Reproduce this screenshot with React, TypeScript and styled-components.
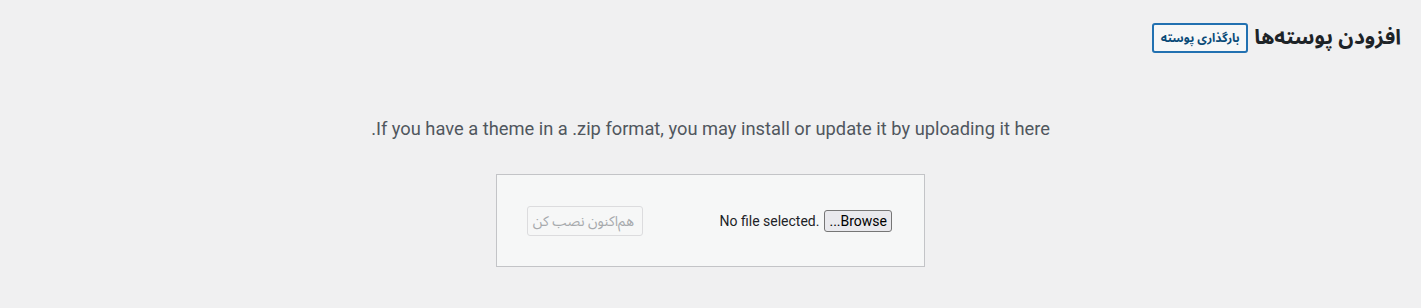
import React from "react";
import styled, { createGlobalStyle } from "styled-components";

const Global = createGlobalStyle`
  html, body { margin: 0; padding: 0; background: #f0f0f1; }
  body {
    font-family: Roboto, "Noto Sans Arabic", "DejaVu Sans", sans-serif;
    color: #3c434a;
    direction: rtl;
  }
`;

const Wrap = styled.div`
  padding: 22px 20px 0 20px;
  direction: rtl;
`;

const HeaderRow = styled.div`
  display: flex;
  align-items: center;
  gap: 6px;
  height: 32px;
`;

const Title = styled.h1`
  margin: 0;
  font-size: 21px;
  font-weight: 700;
  line-height: 1.3;
  color: #1d2327;
  white-space: nowrap;
`;

const PageAction = styled.a`
  display: inline-flex;
  align-items: center;
  justify-content: center;
  height: 30px;
  padding: 0 8px;
  border: 2px solid #2271b1;
  border-radius: 3px;
  background: #f6f7f7;
  color: #0a4b78;
  font-size: 12px;
  font-weight: 700;
  text-decoration: none;
  box-sizing: border-box;
  width: 96px;
  white-space: nowrap;
`;

const Upload = styled.div`
  display: flex;
  flex-direction: column;
  align-items: center;
  padding-top: 62px;
`;

const Help = styled.p`
  margin: 0 0 32px;
  font-size: 18.3px;
  line-height: 26px;
  color: #50575e;
  text-align: center;
  white-space: nowrap;
`;

const Form = styled.form`
  display: flex;
  align-items: center;
  justify-content: space-between;
  width: 429px;
  height: 93px;
  box-sizing: border-box;
  padding: 0 32px 0 30px;
  background: #f6f7f7;
  border: 1px solid #c3c4c7;
  margin: 0;
`;

const FileField = styled.div`
  display: flex;
  align-items: center;
  gap: 5px;
  font-size: 14px;
  color: #1d2327;
  white-space: nowrap;
  margin-top: 1px;
`;

const FileStatus = styled.span`
  direction: ltr;
  unicode-bidi: isolate;
`;

const BrowseButton = styled.span`
  display: inline-flex;
  align-items: center;
  height: 22px;
  padding: 0 4px;
  box-sizing: border-box;
  border: 1px solid #767676;
  border-radius: 3px;
  background: #e9e9ed;
  font-size: 14px;
  color: #000;
`;

const InstallButton = styled.button`
  height: 30px;
  width: 116px;
  box-sizing: border-box;
  border: 1px solid #dcdcde;
  border-radius: 3px;
  background: #f6f7f7;
  color: #a7aaad;
  font-family: inherit;
  font-size: 14px;
  padding: 0 8px;
  white-space: nowrap;
`;

export default function App() {
  return (
    <>
      <Global />
      <Wrap>
        <HeaderRow>
          <Title>افزودن پوسته‌ها</Title>
          <PageAction href="#">بارگذاری پوسته</PageAction>
        </HeaderRow>
        <Upload>
          <Help>If you have a theme in a .zip format, you may install or update it by uploading it here.</Help>
          <Form>
            <FileField>
              <BrowseButton>Browse...</BrowseButton>
              <FileStatus>No file selected.</FileStatus>
            </FileField>
            <InstallButton type="button" disabled>هم‌اکنون نصب کن</InstallButton>
          </Form>
        </Upload>
      </Wrap>
    </>
  );
}
